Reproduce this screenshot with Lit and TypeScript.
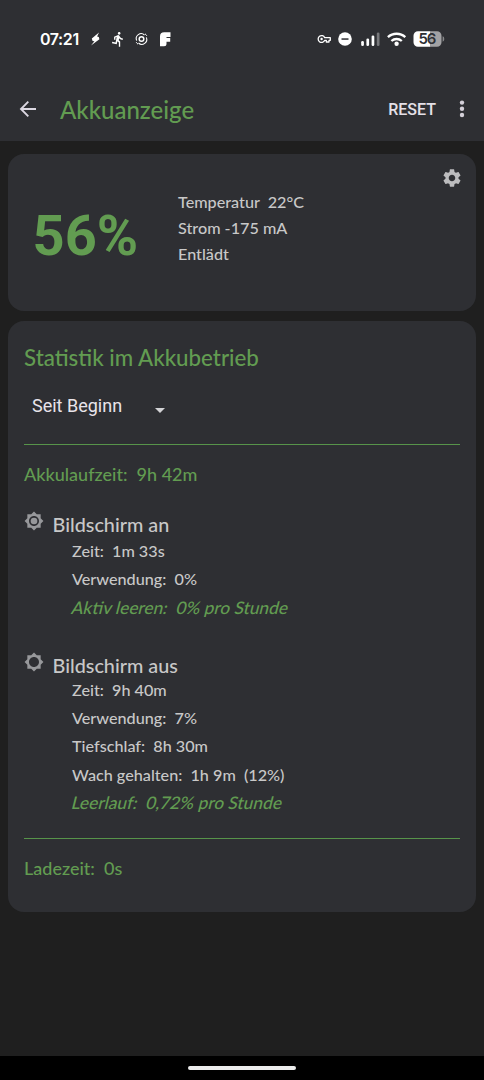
import { LitElement, html, css, svg } from "lit";
import { customElement } from "lit/decorators.js";

const SUN = "M20 8.69V4h-4.69L12 .69 8.69 4H4v4.69L.69 12 4 15.31V20h4.69L12 23.31 15.31 20H20v-4.69L23.31 12 20 8.69zM12 18c-3.31 0-6-2.69-6-6s2.69-6 6-6 6 2.69 6 6-2.69 6-6 6z";

interface Row { text: string; accent?: boolean }
interface Section { title: string; on: boolean; rows: Row[] }

const SECTIONS: Section[] = [
  {
    title: "Bildschirm an",
    on: true,
    rows: [
      { text: "Zeit:  1m 33s" },
      { text: "Verwendung:  0%" },
      { text: "Aktiv leeren:  0% pro Stunde", accent: true },
    ],
  },
  {
    title: "Bildschirm aus",
    on: false,
    rows: [
      { text: "Zeit:  9h 40m" },
      { text: "Verwendung:  7%" },
      { text: "Tiefschlaf:  8h 30m" },
      { text: "Wach gehalten:  1h 9m  (12%)" },
      { text: "Leerlauf:  0,72% pro Stunde", accent: true },
    ],
  },
];

@customElement("status-bar")
export class StatusBar extends LitElement {
  static styles = css`
    :host { display: flex; align-items: center; height: 77px; padding: 0 39px 0 40px; box-sizing: border-box; color: #fff; }
    .clock { font: 600 16px/20px Inter, sans-serif; letter-spacing: -0.4px; width: 47px; white-space: nowrap; }
    .left { width: 84px; height: 20px; display: block; }
    .right { width: 128px; height: 20px; display: block; margin-left: auto; }
    .level { font: 600 15px Inter, sans-serif; letter-spacing: -1.2px; }
  `;
  render() {
    return html`
      <span class="clock">07:21</span>
      <svg class="left" viewBox="0 0 84 20" fill="#fff">
        <path d="M12 3.500 4.800 9.600l.8 2.500 1.800.2L4 16.500l8.400-6.300-.6-2.300-1.700-.3z" />
        <g transform="translate(23 2) scale(.68)">
          <path d="M13.490 5.480c1.100 0 2-.9 2-2s-.9-2-2-2-2 .9-2 2 .9 2 2 2zm-3.600 13.900 1-4.400 2.100 2v6h2v-7.500l-2.100-2 .6-3c1.300 1.500 3.300 2.500 5.500 2.500v-2c-1.900 0-3.500-1-4.300-2.400l-1-1.600c-.4-.6-1-1-1.700-1-.3 0-.5.100-.8.100l-5.200 2.200v4.700h2v-3.400l1.800-.7-1.600 8.100-4.900-1-.4 2 7 1.400z" />
        </g>
        <g fill="none" stroke="#fff" transform="translate(54.500 10)">
          <circle r="2.300" stroke-width="1.500" />
          <path d="M-4.800 1.600A4.900 4.900 0 0 1 3-4M4.800-1.600A4.900 4.900 0 0 1-3 4" stroke-width="1.100" />
          <path d="M3.500-5.200A6.300 6.300 0 0 1 5.300-3.200M-3.500 5.200A6.300 6.300 0 0 1-5.300 3.200" stroke-width="1" />
        </g>
        <path d="M73 7.500q0-4.200 4.200-4.200h6.300v4.600h-4v1.200h3.700v3.700h-3.700v2q0 2.500-2.500 2.500h-4z" />
      </svg>
      <svg class="right" viewBox="0 0 128 20" fill="#fff">
        <g fill="none" stroke="#fff" stroke-width="1.300" stroke-linejoin="round">
          <path d="M7.700 8.700A3.400 3.400 0 1 0 7.700 11.300H9.300V13H12V11.300H13.300V8.700z" />
        </g>
        <circle cx="4.600" cy="10" r="1.200" />
        <circle cx="28" cy="10" r="6.800" />
        <path d="M24.500 9.300h7v1.500h-7z" fill="#2e2f33" />
        <rect x="44.200" y="12" width="2.700" height="5" rx="1.300" />
        <rect x="49.400" y="9.500" width="2.700" height="7.500" rx="1.300" />
        <rect x="54.600" y="6.500" width="2.700" height="10.500" rx="1.300" />
        <rect x="59.800" y="3.500" width="2.700" height="13.500" rx="1.300" fill="#77787b" />
        <g fill="none" stroke="#fff" stroke-width="2.300">
          <path d="M70.900 8.200a12.700 12.700 0 0 1 17.400 0M74.400 12a7.700 7.700 0 0 1 10.400 0" />
        </g>
        <circle cx="79.600" cy="14.800" r="2.200" />
        <path d="M101 2.200h12.500v15.600H101a4.500 4.500 0 0 1-4.500-4.500V6.700A4.500 4.500 0 0 1 101 2.200z" />
        <path d="M113.500 2.200h6.500a4.500 4.500 0 0 1 4.500 4.500v6.600a4.500 4.500 0 0 1-4.500 4.500h-6.500z" fill="#a2a2a4" />
        <path d="M125.600 7.300q1.700.3 1.700 2.700t-1.700 2.700z" fill="#88898b" />
        <text class="level" x="109.800" y="15.300" text-anchor="middle" fill="#2e2f33">56</text>
      </svg>
    `;
  }
}

@customElement("app-root")
export class AppRoot extends LitElement {
  static styles = css`
    :host { display: flex; flex-direction: column; width: 484px; height: 1080px; background: #1f1f1f; font-family: Lato, sans-serif; font-weight: 500; color: #c8c8c8; overflow: hidden; }
    header { background: #2e2f33; height: 141px; flex: none; }
    .toolbar { display: flex; align-items: center; height: 64px; }
    .back { width: 20px; height: 20px; margin-left: 18px; display: block; }
    .title { font-size: 24px; line-height: 30px; margin: 1px 0 0 22px; color: #629c51; flex: 1; white-space: nowrap; }
    .reset { font: 500 16px/20px Roboto, sans-serif; color: #e4e0e8; margin-top: 1px; }
    .more { width: 6px; height: 20px; margin: 0 19px 0 23px; display: block; }
    main { display: flex; flex-direction: column; gap: 10px; padding: 13px 8px 0; flex: 1; }
    .card { background: #2e2f33; border-radius: 16px; box-sizing: border-box; }
    .summary { height: 157px; display: flex; align-items: flex-start; }
    .percent { font: 700 56px/66px Roboto, sans-serif; color: #629c51; width: 145px; padding: 49px 0 0 24.500px; box-sizing: border-box; flex: none; }
    .facts { padding: 34.500px 0 0 25px; flex: 1; }
    .fact { font-size: 16.200px; line-height: 26.400px; white-space: pre; }
    .gear { width: 20px; height: 20px; margin: 14px 14px 0 0; display: block; }
    .stats { height: 591px; padding: 24px 16px 0; }
    .heading { font-size: 22.300px; line-height: 25px; color: #629c51; }
    .select { display: flex; align-items: center; height: 40px; margin-top: 15px; padding-left: 8px; font: 400 18px/22px Roboto, sans-serif; color: #e8e4ea; }
    .choice { width: 123px; padding-top: 1px; }
    .caret { width: 10px; height: 5px; margin-top: 11px; display: block; }
    .rule { height: 1px; background: #57944a; }
    .first { margin-top: 19px; }
    .second { margin-top: 21px; }
    .total { font-size: 18px; line-height: 22px; color: #629c51; white-space: pre; }
    .runtime { margin-top: 18px; }
    .charge { margin-top: 18px; }
    .section { margin-top: 26px; }
    .section.off { margin-top: 30px; }
    .section-head { display: flex; height: 26px; font-size: 19.800px; line-height: 27px; }
    .off .section-head { height: 24px; }
    .sun { width: 20px; height: 20px; margin: 0 8.500px 0 0; display: block; flex: none; }
    .row { font-size: 16.200px; line-height: 28.300px; padding-left: 48px; white-space: pre; }
    .accent { color: #629c51; font-size: 17.300px; transform: skewX(-14deg); }
    footer { height: 24px; background: #000; display: flex; justify-content: center; flex: none; }
    .pill { width: 108px; height: 4px; border-radius: 2px; background: #eceded; margin-top: 10px; }
  `;

  private section(s: Section) {
    return html`
      <section class="section ${s.on ? "" : "off"}">
        <div class="section-head">
          <svg class="sun" viewBox="0 0 24 24" fill="#97989b">
            <path d=${SUN} />
            ${s.on ? svg`<circle cx="12" cy="12" r="4" />` : ""}
          </svg>
          <span>${s.title}</span>
        </div>
        ${s.rows.map((r) => html`<div class="row ${r.accent ? "accent" : ""}">${r.text}</div>`)}
      </section>
    `;
  }

  render() {
    return html`
      <header>
        <status-bar></status-bar>
        <div class="toolbar">
          <svg class="back" viewBox="0 0 20 20" fill="none" stroke="#dcd8e2" stroke-width="1.900">
            <path d="M18 10H3.500M10.300 2.700 3 10l7.300 7.300" />
          </svg>
          <span class="title">Akkuanzeige</span>
          <span class="reset">RESET</span>
          <svg class="more" viewBox="0 0 6 20" fill="#d4d0d9">
            <circle cx="3" cy="3.600" r="2.200" /><circle cx="3" cy="9.800" r="2.200" /><circle cx="3" cy="16" r="2.200" />
          </svg>
        </div>
      </header>
      <main>
        <div class="card summary">
          <div class="percent">56%</div>
          <div class="facts">
            <div class="fact">Temperatur  22°C</div>
            <div class="fact">Strom -175 mA</div>
            <div class="fact">Entlädt</div>
          </div>
          <svg class="gear" viewBox="1 1 22 22" fill="#bcbcbe">
            <path d="M19.140 12.940c.04-.3.060-.61.060-.94 0-.32-.02-.64-.07-.94l2.030-1.580c.18-.14.230-.41.120-.61l-1.920-3.320c-.12-.22-.37-.29-.59-.22l-2.390.96c-.5-.38-1.030-.7-1.620-.94l-.36-2.540c-.04-.24-.24-.41-.48-.41h-3.840c-.24 0-.43.170-.47.410l-.36 2.540c-.59.240-1.130.570-1.620.940l-2.390-.96c-.22-.08-.47 0-.59.220L2.740 8.870c-.12.210-.08.470.120.610l2.030 1.580c-.05.300-.09.630-.09.940s.02.640.070.940l-2.030 1.580c-.18.140-.23.410-.12.610l1.920 3.320c.12.220.370.290.590.220l2.390-.96c.5.380 1.030.700 1.620.940l.36 2.540c.05.240.240.410.480.410h3.840c.24 0 .44-.17.470-.41l.36-2.540c.59-.24 1.130-.56 1.620-.94l2.390.96c.22.080.470 0 .59-.22l1.920-3.320c.12-.22.070-.47-.12-.61l-2.010-1.580zM12 15.600c-1.980 0-3.600-1.620-3.600-3.600s1.620-3.600 3.600-3.600 3.600 1.620 3.600 3.600-1.620 3.600-3.600 3.600z" />
          </svg>
        </div>
        <div class="card stats">
          <div class="heading">Statistik im Akkubetrieb</div>
          <div class="select">
            <span class="choice">Seit Beginn</span>
            <svg class="caret" viewBox="0 0 10 5" fill="#d3d3d6"><path d="M0 0h10L5 5z" /></svg>
          </div>
          <div class="rule first"></div>
          <div class="total runtime">Akkulaufzeit:  9h 42m</div>
          ${SECTIONS.map((s) => this.section(s))}
          <div class="rule second"></div>
          <div class="total charge">Ladezeit:  0s</div>
        </div>
      </main>
      <footer><div class="pill"></div></footer>
    `;
  }
}
